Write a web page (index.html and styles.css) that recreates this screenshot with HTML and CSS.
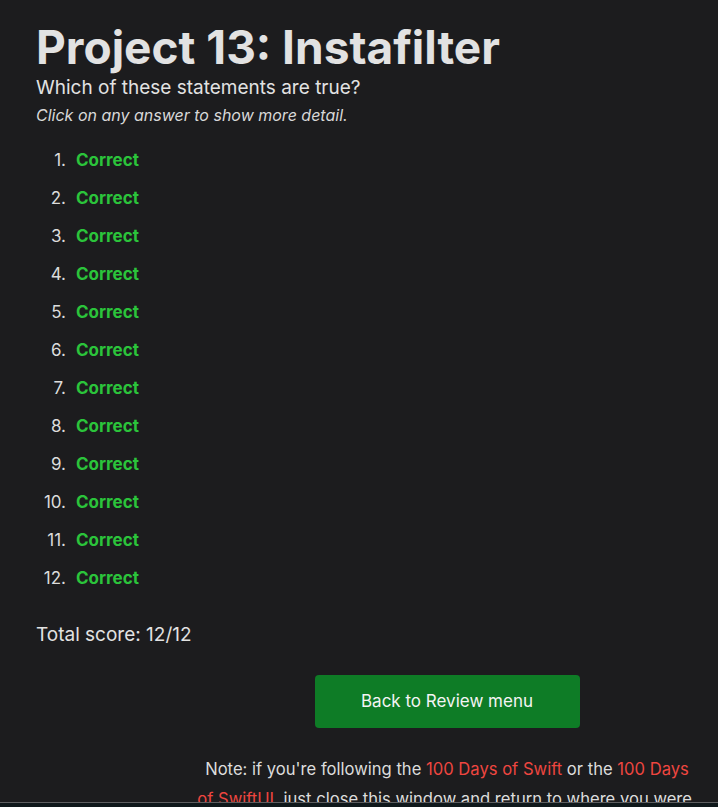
FILE: index.html
```html
<!DOCTYPE html>
<html lang="en">
<head>
<meta charset="utf-8">
<title>Project 13: Instafilter</title>
<link rel="stylesheet" href="styles.css">
</head>
<body>
<main class="page">
  <h1 class="title">Project 13: Instafilter</h1>
  <p class="lead">Which of these statements are true?</p>
  <p class="hint">Click on any answer to show more detail.</p>
  <ol class="answers">
    <li><span class="correct">Correct</span></li>
    <li><span class="correct">Correct</span></li>
    <li><span class="correct">Correct</span></li>
    <li><span class="correct">Correct</span></li>
    <li><span class="correct">Correct</span></li>
    <li><span class="correct">Correct</span></li>
    <li><span class="correct">Correct</span></li>
    <li><span class="correct">Correct</span></li>
    <li><span class="correct">Correct</span></li>
    <li><span class="correct">Correct</span></li>
    <li><span class="correct">Correct</span></li>
    <li><span class="correct">Correct</span></li>
  </ol>
  <p class="score">Total score: 12/12</p>
  <div class="footer">
    <a class="button" href="#">Back to Review menu</a>
    <p class="note">Note: if you're following the <a class="link" href="#">100 Days of Swift</a> or the <a class="link" href="#">100 Days of SwiftUI</a>, just close this window and return to where you were.</p>
  </div>
</main>
</body>
</html>
```
FILE: styles.css
```css
html, body {
  margin: 0;
  padding: 0;
}
body {
  background: #0f181b;
  color: #e2e2e2;
  font-family: Inter, "Noto Sans", sans-serif;
  height: 807px;
  overflow: hidden;
}
.page {
  box-sizing: border-box;
  height: 803px;
  overflow: hidden;
  background: #1c1c1e;
  border-bottom: 1px solid #5e5e60;
  padding: 20px 0 0 36px;
}
.title {
  margin: 0;
  font-size: 46px;
  font-weight: 700;
  line-height: 54px;
  color: #e2e2e2;
}
.lead {
  margin: 1px 0 0 0;
  font-size: 19px;
  line-height: 26px;
}
.hint {
  margin: 1px 0 0 0;
  font-size: 16px;
  font-style: italic;
  line-height: 26px;
  color: #d8d8d8;
}
.answers {
  margin: 21px 0 0 0;
  padding: 0;
  list-style: none;
  counter-reset: item;
  font-size: 17px;
  line-height: 22px;
}
.answers li {
  display: flex;
  margin-bottom: 16px;
  counter-increment: item;
}
.answers li::before {
  content: counter(item) ".";
  width: 30px;
  margin-right: 10px;
  text-align: right;
  color: #dcdcdc;
}
.correct {
  color: #2bc43b;
  font-weight: 700;
  font-size: 17px;
}
.score {
  margin: 33px 0 0 0;
  font-size: 19px;
  line-height: 26px;
}
.footer {
  margin: 27px 0 0 159px;
  width: 504px;
  display: flex;
  flex-direction: column;
  align-items: center;
}
.button {
  display: block;
  width: 265px;
  height: 53px;
  line-height: 53px;
  text-align: center;
  background: #0e7c26;
  color: #f4f4f4;
  border-radius: 4px;
  font-size: 17px;
  text-decoration: none;
}
.note {
  margin: 26px 0 0 0;
  text-align: center;
  font-size: 16.6px;
  line-height: 30px;
  color: #dcdcdc;
}
.link {
  color: #ee4640;
  text-decoration: none;
}
```
